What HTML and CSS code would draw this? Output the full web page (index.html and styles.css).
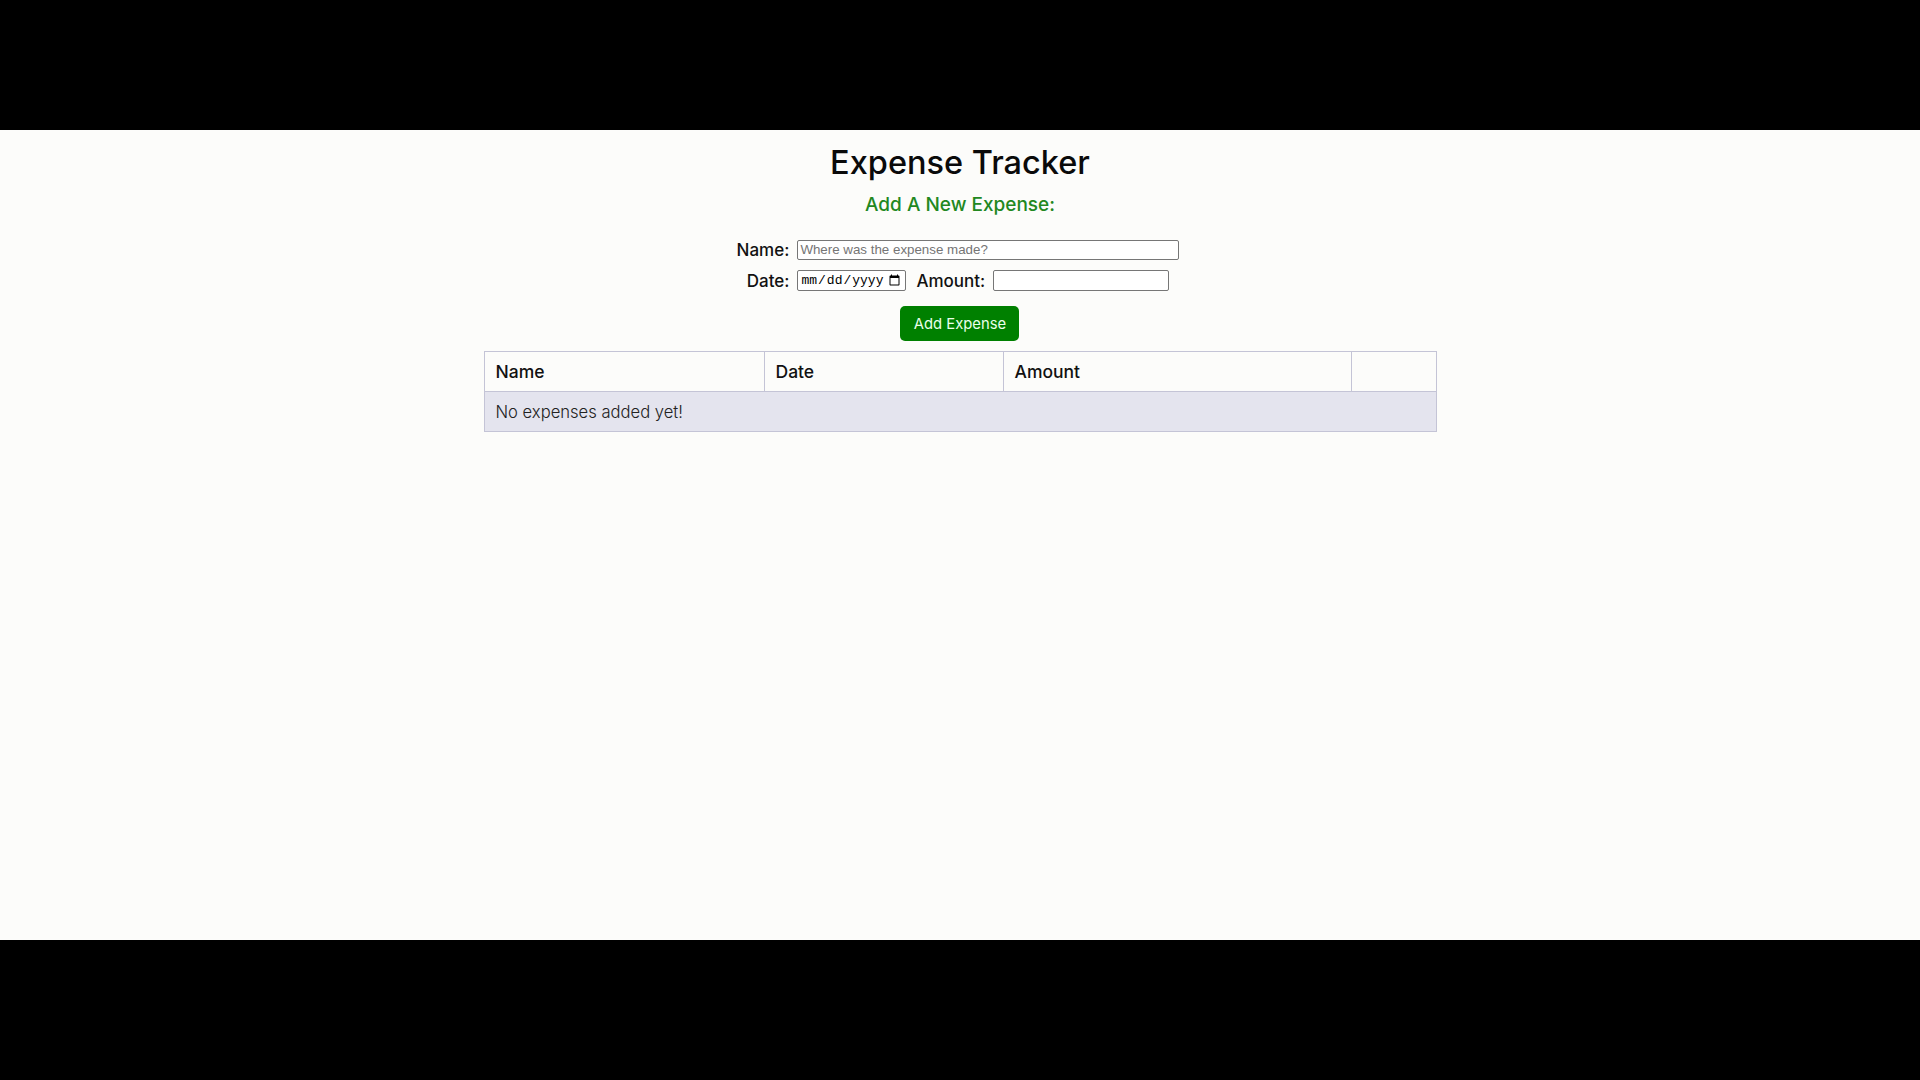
FILE: index.html
```html
<!DOCTYPE html>
<html lang="en">
<head>
<meta charset="utf-8">
<title>Expense Tracker</title>
<link rel="stylesheet" href="styles.css">
</head>
<body>
<div class="bar"></div>
<main class="page">
  <h1 class="title">Expense Tracker</h1>
  <h2 class="subtitle">Add A New Expense:</h2>
  <form class="form">
    <div class="row">
      <label class="label" for="name">Name:</label>
      <input class="input input-name" id="name" type="text" placeholder="Where was the expense made?">
    </div>
    <div class="row">
      <label class="label" for="date">Date:</label>
      <input class="input input-date" id="date" type="date">
      <label class="label label-amount" for="amount">Amount:</label>
      <input class="input input-amount" id="amount" type="text">
    </div>
    <button class="btn" type="button">Add Expense</button>
  </form>
  <table class="table">
    <colgroup>
      <col class="c-name"><col class="c-date"><col class="c-amount"><col class="c-act">
    </colgroup>
    <thead>
      <tr><th>Name</th><th>Date</th><th>Amount</th><th></th></tr>
    </thead>
    <tbody>
      <tr class="empty"><td colspan="4">No expenses added yet!</td></tr>
    </tbody>
  </table>
</main>
<div class="bar bar-bottom"></div>
</body>
</html>
```
FILE: styles.css
```css
html, body {
  margin: 0;
  padding: 0;
  background: #000;
}
body {
  display: flex;
  flex-direction: column;
  height: 1080px;
  overflow: hidden;
  font-family: Inter, "DejaVu Sans", sans-serif;
}
.bar {
  height: 130px;
  background: #000;
  flex: none;
}
.bar-bottom {
  height: 140px;
}
.page {
  height: 810px;
  flex: none;
  background: #fcfcfa;
  display: flex;
  flex-direction: column;
  align-items: center;
  box-sizing: border-box;
  padding-top: 13px;
}
.title {
  margin: 0;
  font-size: 32.5px;
  line-height: 40px;
  font-weight: 500;
  color: #0a0a0a;
}
.subtitle {
  margin: 10px 0 0;
  font-size: 19px;
  line-height: 24px;
  font-weight: 500;
  color: #22881f;
}
.form {
  margin-top: 22px;
  display: flex;
  flex-direction: column;
  align-items: center;
}
.row {
  display: flex;
  align-items: center;
  gap: 8px;
  height: 21px;
  margin-bottom: 10px;
  transform: translateX(-2px);
}
.label {
  font-size: 17px;
  font-weight: 500;
  color: #111;
}
.label-amount {
  margin-left: 2px;
}
.input {
  box-sizing: border-box;
  height: 21px;
  margin: 0;
  border: 1px solid #767676;
  border-radius: 2px;
  padding: 1px 2px;
  font-family: "Liberation Sans", Arial, sans-serif;
  font-size: 13.33px;
  background: #fff;
  color: #000;
}
.input-name {
  width: 382px;
  height: 20px;
}
.input::placeholder {
  color: #757575;
}
.input-date {
  width: 109px;
  font-family: "Liberation Mono", monospace;
  font-size: 13px;
}
.input-amount {
  width: 176px;
}
.btn {
  margin-top: 5px;
  width: 119px;
  height: 35px;
  border: none;
  border-radius: 5px;
  background: #008000;
  color: #eaffea;
  font-family: Inter, "DejaVu Sans", sans-serif;
  font-size: 14.8px;
  font-weight: 400;
  padding: 0;
}
.table {
  margin-top: 10px;
  width: 952px;
  border-collapse: collapse;
  table-layout: fixed;
  border: 1px solid #c4c4d6;
}
.c-name { width: 280px; }
.c-date { width: 239px; }
.c-amount { width: 348px; }
.c-act { width: 85px; }
.table th {
  height: 40px;
  box-sizing: border-box;
  padding: 0 11px;
  text-align: left;
  font-size: 17.5px;
  font-weight: 500;
  color: #111;
  border: 1px solid #c4c4d6;
}
.table td {
  height: 40px;
  box-sizing: border-box;
  padding: 0 11px;
  font-size: 16.6px;
  font-weight: 300;
  color: #222;
  background: #e4e4ee;
  border: 1px solid #c4c4d6;
}
```
